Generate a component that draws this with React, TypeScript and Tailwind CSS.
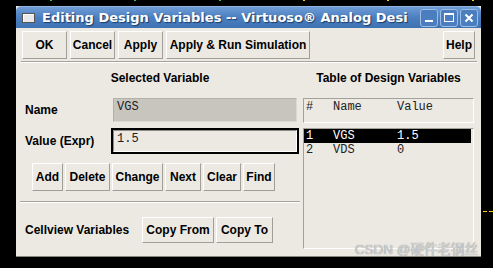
import React from 'react'

const sans = { fontFamily: '"Liberation Sans", Arial, sans-serif' }
const mono = { fontFamily: '"Liberation Mono", "Courier New", monospace' }

function Btn({ label, w, h = 28 }: { label: string; w: number; h?: number }) {
  return (
    <button
      className="flex items-center justify-center bg-[#ece9e3] border border-t-white border-l-white border-b-[#a19e97] border-r-[#a19e97] text-[12px] font-bold text-black leading-none"
      style={{ width: w, height: h, ...sans }}
    >
      {label}
    </button>
  )
}

function Sep({ className = '' }: { className?: string }) {
  return <div className={`h-[2px] border-t border-t-[#a4a09a] border-b border-b-white ${className}`} />
}

export default function App() {
  const dots = [
    { x: 50, c: 'bg-[#22c55e]' },
    { x: 134, c: 'bg-[#22c55e]' },
    { x: 219, c: 'bg-[#22c55e]' },
    { x: 303, c: 'bg-[#facc15]' },
    { x: 387, c: 'bg-[#facc15]' },
    { x: 472, c: 'bg-[#facc15]' },
  ]

  return (
    <div className="relative w-[493px] h-[268px] bg-black overflow-hidden" style={sans}>
      {dots.map((d) => (
        <div key={d.x} className={`absolute top-0 h-[1px] w-[2px] ${d.c}`} style={{ left: d.x }} />
      ))}
      <div className="absolute left-[483px] top-[211px] h-[1px] w-[4px] bg-[#facc15]" />
      <div className="absolute left-[489px] top-[211px] h-[1px] w-[4px] bg-[#facc15]" />

      <div className="ml-[16px] mt-[6px] w-[465px] h-[251px] flex flex-col bg-[#ece9e3] border-b border-b-[#8a8781]">
        {/* title bar */}
        <div className="h-[22px] flex items-center rounded-t-[5px] bg-gradient-to-b from-[#6f9dd6] via-[#4b7fc0] to-[#3e72b2] border-t border-t-[#8fb3e2]">
          <div className="ml-[6px] w-[13px] h-[10px] bg-[#e9e9e9] border border-[#555] shadow-[inset_1px_1px_0_#fff]" />
          <div
            className="ml-[7px] text-[13px] font-bold text-white whitespace-nowrap [text-shadow:1px_1px_1px_#1d3b66]"
            style={{ fontFamily: '"DejaVu Sans", sans-serif' }}
          >
            Editing Design Variables -- Virtuoso® Analog Desi
          </div>
          <div className="ml-auto mr-[3px] flex gap-[2px]">
            <div className="w-[18px] h-[18px] rounded-[3px] border border-[#9dbde6] bg-[#4a7ebf] flex items-end justify-center pb-[4px]">
              <div className="w-[8px] h-[2px] bg-white" />
            </div>
            <div className="w-[18px] h-[18px] rounded-[3px] border border-[#9dbde6] bg-[#4a7ebf] flex items-center justify-center">
              <div className="w-[10px] h-[9px] border-[1.5px] border-white border-t-[2px]" />
            </div>
            <div className="w-[18px] h-[18px] rounded-[3px] border border-[#9dbde6] bg-[#4a7ebf] flex items-center justify-center">
              <svg width="10" height="10" viewBox="0 0 10 10">
                <path d="M1.5 1.5 L8.5 8.5 M8.5 1.5 L1.5 8.5" stroke="white" strokeWidth="2" />
              </svg>
            </div>
          </div>
        </div>

        {/* body */}
        <div className="relative flex-1 flex flex-col">
          <div className="flex gap-[3px] pl-[6px] pr-[6px] pt-[3px]">
            <Btn label="OK" w={45} />
            <Btn label="Cancel" w={45} />
            <Btn label="Apply" w={45} />
            <Btn label="Apply & Run Simulation" w={144} />
            <div className="ml-auto">
              <Btn label="Help" w={32} />
            </div>
          </div>
          <Sep className="ml-[5px] mr-[4px] mt-[2px]" />

          <div className="flex pl-[4px]">
            {/* left column */}
            <div className="w-[280px] flex flex-col">
              <div className="mt-[8px] h-[14px] leading-[14px] text-center text-[12px] font-bold text-black">Selected Variable</div>
              <div className="mt-[13px] flex items-center h-[24px]">
                <div className="pl-[5px] w-[93px] text-[12px] font-bold text-black">Name</div>
                <div className="w-[184px] h-[24px] bg-[#c8c5bf] border border-t-[#b3b0aa] border-l-[#b3b0aa] border-b-[#dcd9d3] border-r-[#dcd9d3] pl-[3px] pt-[1px] text-[12px] leading-[14px] text-[#222]" style={mono}>
                  VGS
                </div>
              </div>
              <div className="mt-[6px] flex items-center h-[26px]">
                <div className="pl-[5px] w-[91px] text-[12px] font-bold text-black">Value (Expr)</div>
                <div className="w-[188px] h-[26px] border-2 border-black">
                  <div className="h-full border border-t-[#8f8c86] border-l-[#8f8c86] border-b-white border-r-white pl-[3px] pt-[1px] text-[12px] leading-[14px] text-[#222]" style={mono}>
                    1.5
                  </div>
                </div>
              </div>
              <div className="mt-[9px] pl-[12px] flex gap-[2px]">
                <Btn label="Add" w={31} />
                <Btn label="Delete" w={45} />
                <Btn label="Change" w={51} />
                <Btn label="Next" w={36} />
                <Btn label="Clear" w={38} />
                <Btn label="Find" w={32} />
              </div>
              <Sep className="mt-[10px]" />
              <div className="mt-[14px] flex items-center">
                <div className="pl-[5px] w-[122px] text-[12px] font-bold text-black">Cellview Variables</div>
                <div className="flex gap-[2px]">
                  <Btn label="Copy From" w={72} h={26} />
                  <Btn label="Copy To" w={57} h={26} />
                </div>
              </div>
            </div>

            {/* right column */}
            <div className="ml-[3px] w-[171px] flex flex-col">
              <div className="mt-[8px] h-[14px] leading-[14px] text-center text-[12px] font-bold text-black">Table of Design Variables</div>
              <div className="mt-[13px] h-[25px] border border-t-[#a4a09a] border-l-[#a4a09a] border-b-white border-r-white text-[12px] leading-[14px] text-[#222]" style={mono}>
                <div className="flex pl-[2px] pt-[1px]">
                  <span className="w-[27px]">#</span>
                  <span className="w-[64px]">Name</span>
                  <span>Value</span>
                </div>
              </div>
              <div className="mt-[5px] h-[121px] border border-t-[#a4a09a] border-l-[#a4a09a] border-b-white border-r-white text-[12px] leading-[14px]" style={mono}>
                <div className="flex pl-[2px] mr-[2px] bg-black text-white">
                  <span className="w-[27px]">1</span>
                  <span className="w-[64px]">VGS</span>
                  <span>1.5</span>
                </div>
                <div className="flex pl-[2px] text-[#222]">
                  <span className="w-[27px]">2</span>
                  <span className="w-[64px]">VDS</span>
                  <span>0</span>
                </div>
              </div>
            </div>
          </div>

          <div
            className="absolute right-[3px] bottom-[-2px] text-[13.5px] leading-[16px] text-[#d2d2d2] [text-shadow:0_0_1px_#7a7a7a]"
            style={{ fontFamily: '"Liberation Sans", "Noto Sans CJK SC", sans-serif' }}
          >
            CSDN @硬件老钢丝
          </div>
        </div>
      </div>
    </div>
  )
}
